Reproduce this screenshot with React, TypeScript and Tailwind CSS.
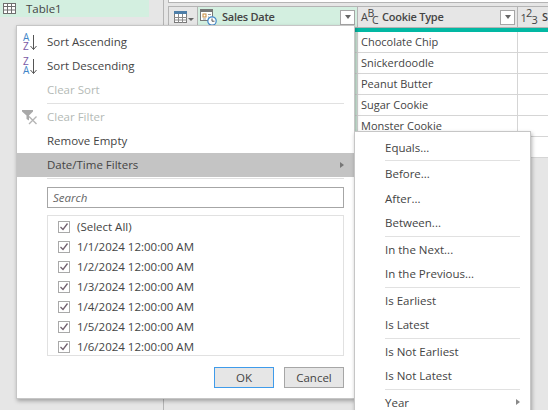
import type { ReactNode } from 'react'

const font = { fontFamily: '"Open Sans", "Noto Sans", sans-serif' }

const rows = ['Chocolate Chip', 'Snickerdoodle', 'Peanut Butter', 'Sugar Cookie', 'Monster Cookie', '']
const dates = ['(Select All)', '1/1/2024 12:00:00 AM', '1/2/2024 12:00:00 AM', '1/3/2024 12:00:00 AM', '1/4/2024 12:00:00 AM', '1/5/2024 12:00:00 AM', '1/6/2024 12:00:00 AM']

function TableIcon() {
  return (
    <svg width="13" height="12" viewBox="0 0 13 12">
      <rect x="0.5" y="0.5" width="12" height="11" fill="#fff" stroke="#7a7a7a" />
      <rect x="0" y="0" width="13" height="3" fill="#4d7ea8" />
      <path d="M0 6.5H13M0 9H13M4.5 3V12M8.5 3V12" stroke="#8a8a8a" strokeWidth="1" />
    </svg>
  )
}

function DateTimeIcon() {
  return (
    <svg width="17" height="17" viewBox="0 0 17 17">
      <rect x="0.5" y="0.5" width="12" height="11" fill="#fff" stroke="#777" />
      <rect x="1" y="1" width="11" height="2" fill="#777" />
      <rect x="3" y="5" width="3" height="3" fill="none" stroke="#c98a3c" />
      <path d="M8 5.5H11M8 8H9M3 10H6" stroke="#999" />
      <circle cx="12" cy="12" r="4.2" fill="#fff" stroke="#3f86c8" strokeWidth="1.2" />
      <path d="M12 9.5V12.2H14.5" fill="none" stroke="#555" />
    </svg>
  )
}

function FilterButton() {
  return (
    <div className="w-[15px] h-[15px] bg-white border border-[#a6a6a6] flex items-center justify-center shrink-0">
      <div className="w-0 h-0 border-x-[3.5px] border-x-transparent border-t-[4px] border-t-[#666]" />
    </div>
  )
}

function SortIcon({ top, bottom, topColor, bottomColor }: { top: string; bottom: string; topColor: string; bottomColor: string }) {
  return (
    <div className="flex items-center gap-[0.5px] h-[18px]">
      <div className="flex flex-col text-[10px] leading-[9px] w-[6px]">
        <span style={{ color: topColor }}>{top}</span>
        <span style={{ color: bottomColor }}>{bottom}</span>
      </div>
      <svg width="7" height="17" viewBox="0 0 7 17">
        <path d="M3.5 1V15.5M0.5 12L3.5 15.5L6.5 12" fill="none" stroke="#555" strokeWidth="1" />
      </svg>
    </div>
  )
}

function ClearFilterIcon() {
  return (
    <svg width="16" height="15" viewBox="0 0 16 15" className="-ml-[1px]">
      <path d="M0 0H11V1.5L7 5.5V10.5L4.5 9V5.5L0 1.5Z" fill="#a8a8a8" />
      <path d="M7 6.5L14.5 14M14.5 6.5L7 14" stroke="#b5b5b5" strokeWidth="1.4" />
    </svg>
  )
}

function Check() {
  return (
    <div className="w-[12px] h-[12px] border border-[#a9a9a9] flex items-center justify-center shrink-0 bg-white">
      <svg width="10" height="10" viewBox="0 0 10 10">
        <path d="M1.5 5L4 7.5L8.5 1.5" fill="none" stroke="#71606e" strokeWidth="1.3" />
      </svg>
    </div>
  )
}

function MenuItem({ label, icon, disabled, active, arrow }: { label: string; icon?: ReactNode; disabled?: boolean; active?: boolean; arrow?: boolean }) {
  return (
    <div className={`h-[24px] flex items-center relative ${active ? 'bg-[#c4c4c4]' : ''}`}>
      <div className="w-[30px] flex pl-[6px] shrink-0">{icon}</div>
      <span className={`text-[11.5px] ${disabled ? 'text-[#b4bab6]' : 'text-[#444]'}`}>{label}</span>
      {arrow && <div className="absolute right-[10px] top-[9px] w-0 h-0 border-y-[3px] border-y-transparent border-l-[4px] border-l-[#777]" />}
    </div>
  )
}

function Sep({ className }: { className: string }) {
  return <div className={`h-px bg-[#e1e1e1] ${className}`} />
}

function SubItem({ label, arrow }: { label: string; arrow?: boolean }) {
  return (
    <div className="h-[24.5px] flex items-center pl-[30px] relative">
      <span className="text-[11.5px] text-[#444]">{label}</span>
      {arrow && <div className="absolute right-[10px] top-[9px] w-0 h-0 border-y-[3px] border-y-transparent border-l-[4px] border-l-[#888]" />}
    </div>
  )
}

export default function App() {
  return (
    <div className="relative w-[548px] h-[410px] overflow-hidden bg-[#e6e6e6] flex" style={font}>
      {/* queries pane */}
      <div className="w-[164px] h-full border-r border-[#b4b4b4] shrink-0">
        <div className="w-[149px] h-[17px] bg-[#d3efe0] flex items-center pl-[3px] gap-[10px]">
          <svg width="13" height="11" viewBox="0 0 13 11">
            <rect x="0.5" y="0.5" width="12" height="10" fill="#fff" stroke="#6e6e6e" />
            <path d="M0 3.5H13M0 7H13M4.5 0V11M8.5 0V11" stroke="#6e6e6e" />
          </svg>
          <span className="text-[11.5px] text-[#444]">Table1</span>
        </div>
      </div>

      {/* data grid */}
      <div className="flex-1 pl-[4px]">
        <div className="h-[3px] mb-[3px] bg-white border-b border-l border-[#b4b4b4]" />
        <div className="border-t border-[#b4b4b4] bg-white">
          <div className="h-[21px] flex bg-[#e6e6e6] border-b border-[#b4b4b4]">
            <div className="w-[30px] border-x border-[#b4b4b4] flex items-center pl-[5px] shrink-0">
              <TableIcon />
              <div className="ml-[1px] mt-[5px] w-0 h-0 border-x-[3px] border-x-transparent border-t-[3px] border-t-[#666]" />
            </div>
            <div className="w-[160px] bg-[#d3efe0] flex items-center pl-[2px] pr-[2px] border-r border-[#b4b4b4] shrink-0">
              <DateTimeIcon />
              <span className="ml-[5px] text-[11px] font-semibold tracking-[-0.25px] text-[#444] flex-1">Sales Date</span>
              <FilterButton />
            </div>
            <div className="w-[160px] flex items-center pl-[2px] pr-[2px] border-r border-[#b4b4b4] shrink-0">
              <svg width="20" height="20" viewBox="0 0 20 20" className="overflow-visible">
                <text x="1" y="14" fontSize="11" fill="#444" fontFamily="Open Sans">A</text>
                <text x="7.5" y="10" fontSize="10.5" fill="#444" fontFamily="Open Sans">B</text>
                <text x="12" y="17" fontSize="10.5" fill="#444" fontFamily="Open Sans">C</text>
              </svg>
              <span className="ml-[2px] text-[11px] font-semibold tracking-[-0.25px] text-[#444] flex-1">Cookie Type</span>
              <FilterButton />
            </div>
            <div className="flex-1 flex items-center pl-[2px] overflow-hidden">
              <svg width="17" height="20" viewBox="0 0 17 20" className="overflow-visible">
                <text x="0.5" y="15" fontSize="11" fill="#444" fontFamily="Open Sans">1</text>
                <text x="6" y="10" fontSize="11" fill="#444" fontFamily="Open Sans">2</text>
                <text x="11.5" y="17" fontSize="11" fill="#444" fontFamily="Open Sans">3</text>
              </svg>
              <span className="ml-[5px] text-[11px] font-semibold text-[#444]">S</span>
            </div>
          </div>
          <div className="h-[4px] bg-[#02b8a3]" />
          {rows.map(r => (
            <div key={r} className="h-[21px] flex border-b border-[#d5d5d5] bg-white">
              <div className="w-[190px] shrink-0 flex justify-end border-r border-[#d5d5d5]"><div className="w-[2px] bg-[#d3efe0]" /></div>
              <div className="w-[160px] shrink-0 pl-[3px] border-r border-[#d5d5d5] flex items-center text-[11px] text-[#444]">{r}</div>
            </div>
          ))}
        </div>
      </div>

      {/* filter dropdown */}
      <div className="absolute left-[16px] top-[25px] w-[339px] h-[374px] bg-white border border-[#c6c6c6] shadow-[1px_2px_4px_rgba(0,0,0,0.3)] pt-[4px]">
        <MenuItem label="Sort Ascending" icon={<SortIcon top="A" bottom="Z" topColor="#3f86c8" bottomColor="#7a5aa6" />} />
        <MenuItem label="Sort Descending" icon={<SortIcon top="Z" bottom="A" topColor="#7a5aa6" bottomColor="#3f86c8" />} />
        <MenuItem label="Clear Sort" disabled />
        <Sep className="ml-[30px] mr-[10px] my-[1px]" />
        <MenuItem label="Clear Filter" disabled icon={<ClearFilterIcon />} />
        <MenuItem label="Remove Empty" />
        <MenuItem label="Date/Time Filters" active arrow />
        <Sep className="ml-[30px] mr-[10px] mt-[1px]" />
        <div className="ml-[30px] mr-[10px] mt-[8px] h-[21px] border border-[#a6a6a6] flex items-center pl-[5px]">
          <span className="text-[11.5px] italic text-[#666]">Search</span>
        </div>
        <div className="ml-[30px] mr-[10px] mt-[7px] h-[141px] border border-[#e1e1e1] pl-[10px] pt-[1px] overflow-hidden">
          {dates.map(d => (
            <div key={d} className="h-[20px] flex items-center gap-[7px]">
              <Check />
              <span className="text-[11.5px] text-[#444] whitespace-nowrap">{d}</span>
            </div>
          ))}
        </div>
        <div className="flex justify-end gap-[10px] mr-[10px] mt-[11px]">
          <button className="w-[60px] h-[21px] border border-[#3f9bea] bg-[#e6e6e6] text-[11.5px] text-[#444]">OK</button>
          <button className="w-[60px] h-[21px] border border-[#a6a6a6] bg-[#e6e6e6] text-[11.5px] text-[#444]">Cancel</button>
        </div>
      </div>

      {/* date/time submenu */}
      <div className="absolute left-[354px] top-[131px] w-[177px] h-[290px] bg-white border border-[#c6c6c6] shadow-[1px_2px_4px_rgba(0,0,0,0.3)] pt-[3px]">
        <SubItem label="Equals..." />
        <Sep className="ml-[30px] mr-[10px] my-[0.5px]" />
        <SubItem label="Before..." />
        <SubItem label="After..." />
        <SubItem label="Between..." />
        <Sep className="ml-[30px] mr-[10px] my-[0.5px]" />
        <SubItem label="In the Next..." />
        <SubItem label="In the Previous..." />
        <Sep className="ml-[30px] mr-[10px] my-[0.5px]" />
        <SubItem label="Is Earliest" />
        <SubItem label="Is Latest" />
        <Sep className="ml-[30px] mr-[10px] my-[0.5px]" />
        <SubItem label="Is Not Earliest" />
        <SubItem label="Is Not Latest" />
        <Sep className="ml-[30px] mr-[10px] my-[0.5px]" />
        <SubItem label="Year" arrow />
      </div>
    </div>
  )
}
